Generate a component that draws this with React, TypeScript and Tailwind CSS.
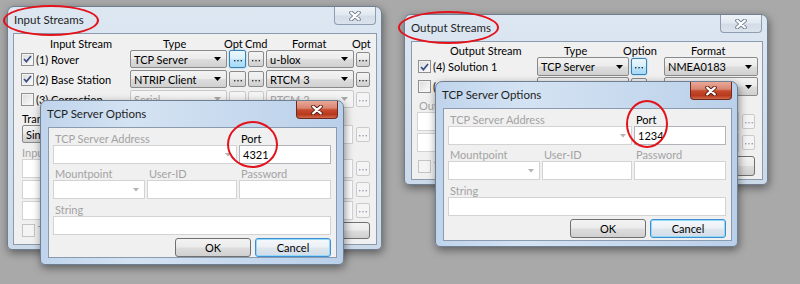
import React from "react";

const BTN_BG = "bg-[linear-gradient(#f3f3f3,#ebebeb_48%,#dddddd_52%,#d0d0d0)]";

function Arrow({ dim = false, small = false }: { dim?: boolean; small?: boolean }) {
  return small ? (
    <svg width="6" height="4" viewBox="0 0 6 4" className="shrink-0">
      <polygon points="0,0 6,0 3,3.5" fill={dim ? "#b4b4b4" : "#000"} />
    </svg>
  ) : (
    <svg width="7" height="4" viewBox="0 0 7 4" className="shrink-0">
      <polygon points="0,0 7,0 3.5,4" fill={dim ? "#a9a9a9" : "#000"} />
    </svg>
  );
}

function Check({ on = false, dim = false }: { on?: boolean; dim?: boolean }) {
  return (
    <span
      className={`flex h-[13px] w-[13px] shrink-0 items-center justify-center border ${
        dim
          ? "border-[#c4c4c4] bg-[#f4f4f4]"
          : "border-[#8e8f8f] bg-[linear-gradient(135deg,#dadada,#fcfcfc)] shadow-[inset_0_0_0_1px_#f4f4f4]"
      }`}
    >
      {on && (
        <svg width="9" height="8" viewBox="0 0 9 8">
          <path d="M1 4 L3.4 6.6 L8 1" fill="none" stroke="#3b4f88" strokeWidth="1.7" />
        </svg>
      )}
    </span>
  );
}

function Combo({ text = "", dim = false, className = "" }: { text?: string; dim?: boolean; className?: string }) {
  return (
    <div
      className={`flex items-center justify-between rounded-[2px] border pl-[3px] pr-[5px] ${
        dim ? "border-[#c9c9c9] bg-[#f4f4f4] text-[#a6a6a6]" : `border-[#8a8a8a] ${BTN_BG} text-black`
      } ${className}`}
    >
      <span className="whitespace-nowrap leading-[13px]">{text}</span>
      <Arrow dim={dim} />
    </div>
  );
}

function EditCombo({ className = "" }: { className?: string }) {
  return (
    <div className={`flex h-[19px] items-center justify-end border border-[#d3d3d3] bg-white pr-[5px] ${className}`}>
      <Arrow dim small />
    </div>
  );
}

function Edit({ value = "", dim = false, className = "" }: { value?: string; dim?: boolean; className?: string }) {
  return (
    <div
      className={`flex h-[19px] items-center border bg-white pl-[3px] leading-[13px] ${
        dim ? "border-[#d3d3d3]" : "border-[#b2b4b9]"
      } ${className}`}
    >
      {value}
    </div>
  );
}

function Dots({ hot = false, dim = false, className = "" }: { hot?: boolean; dim?: boolean; className?: string }) {
  const c = dim ? "#a79cb4" : "#333";
  return (
    <div
      className={`flex shrink-0 items-center justify-center rounded-[2px] border ${
        hot
          ? "border-[#3c7fb1] bg-[linear-gradient(#eaf6fd,#d9f0fc_48%,#bee6fd_52%,#a7d9f5)] shadow-[0_0_2px_#6cc4f0]"
          : dim
          ? "border-[#cacaca] bg-[#f4f4f4]"
          : `border-[#8a8a8a] ${BTN_BG}`
      } ${className}`}
    >
      <svg width="8" height="2" viewBox="0 0 8 2" className="mt-[3px]">
        <rect x="0" y="0" width="1.4" height="1.4" fill={c} />
        <rect x="3.3" y="0" width="1.4" height="1.4" fill={c} />
        <rect x="6.6" y="0" width="1.4" height="1.4" fill={c} />
      </svg>
    </div>
  );
}

function Btn({ label, def = false, className = "" }: { label: string; def?: boolean; className?: string }) {
  return (
    <div
      className={`flex items-center justify-center rounded-[3px] border leading-[13px] ${
        def
          ? "border-[#3c8fd1] bg-[linear-gradient(#f5f8fb,#ebf0f5_48%,#dee6ee_52%,#d3dde7)] shadow-[inset_0_0_0_1px_#93d8f8]"
          : `border-[#707070] ${BTN_BG}`
      } ${className}`}
    >
      {label}
    </div>
  );
}

function CloseX({ active = false }: { active?: boolean }) {
  return (
    <div
      className={`flex h-[18px] w-[42px] items-center justify-center rounded-b-[4px] border border-t-0 ${
        active
          ? "border-[#6d2a1f] bg-[linear-gradient(#e9a899,#d98570_42%,#c64a2f_52%,#b8391c_80%,#d26a4e)]"
          : "border-[#8e9db0] bg-[linear-gradient(#eef3f8,#e1e8f0_48%,#d3dce7_52%,#dbe3ed)]"
      }`}
    >
      <svg width="12" height="10" viewBox="0 0 12 10">
        <path d="M2.2 1.6 L9.8 8.4 M9.8 1.6 L2.2 8.4" stroke={active ? "#5a1a10" : "#6f7c8d"} strokeWidth="4" strokeLinecap="round" fill="none" />
        <path d="M2.2 1.6 L9.8 8.4 M9.8 1.6 L2.2 8.4" stroke="#fff" strokeWidth="2.2" strokeLinecap="round" fill="none" />
      </svg>
    </div>
  );
}

function Win({
  title,
  active = false,
  pos,
  inset,
  children,
}: {
  title: string;
  active?: boolean;
  pos: string;
  inset: string;
  children: React.ReactNode;
}) {
  return (
    <div
      className={`absolute flex flex-col rounded-t-[7px] rounded-b-[5px] border border-[#6f7e90] shadow-[1px_3px_9px_rgba(0,0,0,0.45)] ${
        active
          ? "bg-[linear-gradient(90deg,#bfd4ec,#d4e3f3_30%,#c8daee_62%,#bad0ea)]"
          : "bg-[linear-gradient(#dde7f2,#ccd9e8)]"
      } ${pos}`}
    >
      <div className="flex h-[26px] shrink-0 justify-between pl-[6px] pr-[5px]">
        <span className="self-center text-[11.5px] text-[#1e1e1e]">{title}</span>
        <CloseX active={active} />
      </div>
      <div className={`flex-1 overflow-hidden border border-[#8a9bb0] bg-[#f0f0f0] ${inset}`}>{children}</div>
    </div>
  );
}

function Lbl({ dim = false, className = "", children }: { dim?: boolean; className?: string; children: React.ReactNode }) {
  return (
    <div className={`h-[13px] whitespace-nowrap pl-[2px] leading-[13px] ${dim ? "text-[#a3a3a3]" : "text-black"} ${className}`}>
      {children}
    </div>
  );
}

function TcpOptions({ port }: { port: string }) {
  return (
    <div className="flex h-full flex-col pl-[4px] pt-[4px]">
      <div className="grid grid-cols-[92px_90px_92px] gap-x-[2px]">
        <Lbl dim className="col-span-2">TCP Server Address</Lbl>
        <Lbl>Port</Lbl>
        <EditCombo className="col-span-2" />
        <Edit value={port} />
        <Lbl dim className="mt-[3px]">Mountpoint</Lbl>
        <Lbl dim className="mt-[3px]">User-ID</Lbl>
        <Lbl dim className="mt-[3px]">Password</Lbl>
        <EditCombo />
        <Edit dim />
        <Edit dim />
        <Lbl dim className="col-span-3 mt-[4px]">String</Lbl>
        <Edit dim className="col-span-3" />
      </div>
      <div className="mt-[3px] flex w-[278px] justify-end gap-[4px]">
        <Btn label="OK" className="h-[19px] w-[76px]" />
        <Btn label="Cancel" def className="h-[19px] w-[76px]" />
      </div>
    </div>
  );
}

const inputRows = [
  { on: true, name: "(1) Rover", type: "TCP Server", fmt: "u-blox", hot: true, dim: false },
  { on: true, name: "(2) Base Station", type: "NTRIP Client", fmt: "RTCM 3", hot: false, dim: false },
  { on: false, name: "(3) Correction", type: "Serial", fmt: "RTCM 2", hot: false, dim: true },
];

function InputStreams() {
  return (
    <div className="flex h-full flex-col pt-[3px]">
      <div className="flex h-[13px] pl-[36px] leading-[13px]">
        <span className="w-[113px]">Input Stream</span>
        <span className="w-[61px]">Type</span>
        <span className="w-[21px]">Opt</span>
        <span className="w-[47px]">Cmd</span>
        <span className="w-[60px]">Format</span>
        <span>Opt</span>
      </div>
      <div className="flex flex-col gap-[2px] pl-[7px]">
        {inputRows.map((r) => (
          <div key={r.name} className="flex h-[18px] items-stretch">
            <div className="flex w-[107px] items-center gap-[2px]">
              <Check on={r.on} />
              <span className="whitespace-nowrap leading-[13px]">{r.name}</span>
            </div>
            <Combo text={r.type} dim={r.dim} className="ml-[2px] w-[97px]" />
            <Dots hot={r.hot} dim={r.dim} className={`ml-[2px] w-[17px] self-center ${r.hot ? "h-[18px]" : "h-[16px]"}`} />
            <Dots dim={r.dim} className="ml-[2px] h-[16px] w-[16px] self-center" />
            <Combo text={r.fmt} dim={r.dim} className="ml-[2px] w-[88px]" />
            <Dots dim={r.dim} className="ml-[2px] h-[15px] w-[14px] self-center" />
          </div>
        ))}
      </div>
      <Lbl className="ml-[6px] mt-[4px]">Transmit NMEA GPGGA</Lbl>
      <div className="flex h-[18px] items-stretch gap-[3px] pl-[8px] pr-[6px]">
        <Combo text="Single" className="w-[120px]" />
        <Edit dim className="h-[18px] flex-1" />
        <Edit dim className="h-[18px] flex-1" />
        <Dots dim className="h-[15px] w-[14px] self-center" />
      </div>
      <Lbl dim className="ml-[6px] mt-[3px]">Input File Paths</Lbl>
      <div className="flex flex-col gap-[2px] pl-[8px] pr-[6px]">
        {["a", "b", "c"].map((k) => (
          <div key={k} className="flex h-[19px] items-center gap-[3px]">
            <Edit dim className="flex-1" />
            <Dots dim className="h-[15px] w-[14px]" />
          </div>
        ))}
      </div>
      <div className="mt-[2px] flex h-[17px] items-center pl-[8px] pr-[6px]">
        <Check dim />
        <span className="ml-[3px] flex-1 text-[#a3a3a3]">Time Tag</span>
        <Btn label="Options" className="h-[17px] w-[130px]" />
      </div>
    </div>
  );
}

const outputRows = [
  { on: true, name: "(4) Solution 1", type: "TCP Server", fmt: "NMEA0183", hot: true },
  { on: false, name: "(5) Solution 2", type: "Off", fmt: "NMEA0183", hot: false },
];

function OutputStreams() {
  return (
    <div className="flex h-full flex-col pt-[2px]">
      <div className="flex h-[13px] pl-[38px] leading-[13px]">
        <span className="w-[114px]">Output Stream</span>
        <span className="w-[59px]">Type</span>
        <span className="w-[68px]">Option</span>
        <span>Format</span>
      </div>
      <div className="flex flex-col gap-[1px] pl-[6px]">
        {outputRows.map((r) => (
          <div key={r.name} className="flex h-[19px] items-stretch">
            <div className="flex w-[117px] items-center gap-[2px]">
              <Check on={r.on} />
              <span className="whitespace-nowrap leading-[13px]">{r.name}</span>
            </div>
            <Combo text={r.type} className="ml-[2px] w-[92px]" />
            <Dots hot={r.hot} className="ml-[2px] h-[17px] w-[16px] self-center" />
            <Combo text={r.fmt} className="ml-[17px] w-[94px]" />
          </div>
        ))}
      </div>
      <Lbl dim className="ml-[5px] mt-[3px]">Output File Paths</Lbl>
      <div className="flex flex-col gap-[2px] pl-[5px] pr-[7px]">
        {["a", "b"].map((k) => (
          <div key={k} className="flex h-[19px] items-center gap-[3px]">
            <Edit dim className="flex-1" />
            <Dots dim className="h-[15px] w-[13px]" />
          </div>
        ))}
      </div>
      <div className="mt-[4px] flex h-[20px] items-center pl-[6px] pr-[7px]">
        <Check dim />
        <span className="ml-[3px] flex-1 text-[#a3a3a3]">Time Tag</span>
        <Btn label="Options" className="h-[20px] w-[130px]" />
      </div>
    </div>
  );
}

export default function App() {
  return (
    <div className="relative h-[284px] w-[800px] overflow-hidden bg-[#a9a9a9] font-['Lato','Noto_Sans',sans-serif] text-[11px] text-black">
      <Win title="Input Streams" pos="left-[7px] top-[6px] h-[244px] w-[375px]" inset="mb-[4px] ml-[5px] mr-[4px]">
        <InputStreams />
      </Win>
      <Win title="TCP Server Options" active pos="left-[40px] top-[100px] h-[165px] w-[304px]" inset="mb-[6px] ml-[7px] mr-[6px]">
        <TcpOptions port="4321" />
      </Win>
      <Win title="Output Streams" pos="left-[404px] top-[14px] h-[171px] w-[364px]" inset="mb-[4px] ml-[6px] mr-[4px]">
        <OutputStreams />
      </Win>
      <Win title="TCP Server Options" active pos="left-[435px] top-[81px] h-[166px] w-[303px]" inset="mb-[5px] ml-[7px] mr-[5px]">
        <TcpOptions port="1234" />
      </Win>

      {/* red annotation rings */}
      <div className="absolute left-[3px] top-[5px] h-[31px] w-[96px] rounded-[50%] border-[2.5px] border-[#e3131b]" />
      <div className="absolute left-[227px] top-[121px] h-[47px] w-[51px] rounded-[50%] border-[2.5px] border-[#e3131b]" />
      <div className="absolute left-[398px] top-[11px] h-[33px] w-[101px] rounded-[50%] border-[2.5px] border-[#e3131b]" />
      <div className="absolute left-[626px] top-[100px] h-[48px] w-[42px] rounded-[50%] border-[2.5px] border-[#e3131b]" />
    </div>
  );
}
